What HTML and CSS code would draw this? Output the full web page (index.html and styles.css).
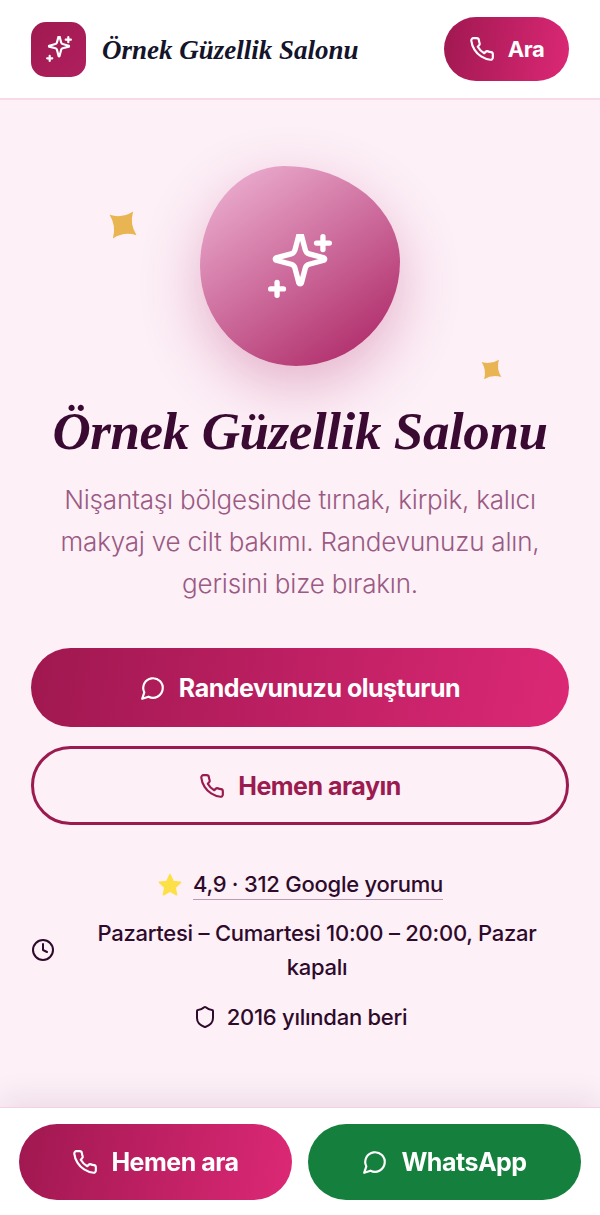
FILE: index.html
```html
<!DOCTYPE html>
<html lang="tr">
  <head>
    <meta charset="UTF-8" />
    <meta name="viewport" content="width=device-width, initial-scale=1.0" />
    <title>Örnek Güzellik Salonu</title>
    <link rel="stylesheet" href="styles.css">
  </head>
  <body>
    <svg class="sprite" aria-hidden="true">
      <symbol id="i-sparkle" viewBox="0 0 24 24">
        <path d="M10.1 14.6A2 2 0 0 0 8.7 13.2L3 11.7a.5.5 0 0 1 0-.9L8.7 9.3A2 2 0 0 0 10.1 7.9L11.6 2.2a.5.5 0 0 1 .9 0L14 7.9A2 2 0 0 0 15.4 9.3L21 10.800a.5.5 0 0 1 0 .9L15.4 13.2A2 2 0 0 0 14 14.6L12.5 20.3a.5.5 0 0 1-.9 0z" transform="translate(0 -1.85)"/>
        <path d="M20.6 1v4.8M18.2 3.4H23M3.4 18.2V23M1 20.6h4.8"/>
      </symbol>
      <symbol id="i-phone" viewBox="0 0 24 24">
        <path d="M22 16.92v3a2 2 0 0 1-2.18 2 19.79 19.79 0 0 1-8.63-3.07 19.5 19.5 0 0 1-6-6 19.79 19.79 0 0 1-3.07-8.67A2 2 0 0 1 4.11 2h3a2 2 0 0 1 2 1.72 12.84 12.84 0 0 0 .7 2.81 2 2 0 0 1-.45 2.11L8.09 9.91a16 16 0 0 0 6 6l1.27-1.27a2 2 0 0 1 2.11-.45 12.84 12.84 0 0 0 2.81.7A2 2 0 0 1 22 16.92z"/>
      </symbol>
      <symbol id="i-chat" viewBox="0 0 24 24">
        <path d="M7.9 20A9 9 0 1 0 4 16.1L2 22Z"/>
      </symbol>
      <symbol id="i-clock" viewBox="0 0 24 24">
        <circle cx="12" cy="12" r="10"/>
        <path d="M12 6v6l4 2"/>
      </symbol>
      <symbol id="i-shield" viewBox="0 0 24 24">
        <path d="M20 13c0 5-3.5 7.5-7.66 8.95a1 1 0 0 1-.67-.01C7.5 20.5 4 18 4 13V6a1 1 0 0 1 1-1c2 0 4.5-1.2 6.24-2.72a1.17 1.17 0 0 1 1.52 0C14.51 3.81 17 5 19 5a1 1 0 0 1 1 1z"/>
      </symbol>
      <symbol id="i-glint" viewBox="0 0 24 24">
        <path d="M1 1 Q12 6 23 1 Q18 12 23 23 Q12 18 1 23 Q6 12 1 1Z"/>
      </symbol>
    </svg>

    <header class="topbar">
      <div class="brand">
        <span class="brand-mark"><svg class="icon icon-26"><use href="#i-sparkle"/></svg></span>
        <span class="brand-name">Örnek Güzellik Salonu</span>
      </div>
      <a class="btn btn-primary btn-call" href="#"><svg class="icon icon-26"><use href="#i-phone"/></svg>Ara</a>
    </header>

    <main class="hero">
      <svg class="glint glint-a"><use href="#i-glint"/></svg>
      <svg class="glint glint-b"><use href="#i-glint"/></svg>
      <div class="blob"><svg class="icon icon-64"><use href="#i-sparkle"/></svg></div>
      <h1>Örnek Güzellik Salonu</h1>
      <p class="lead">Nişantaşı bölgesinde tırnak, kirpik, kalıcı makyaj ve cilt bakımı. Randevunuzu alın, gerisini bize bırakın.</p>
      <div class="actions">
        <a class="btn btn-primary btn-big" href="#"><svg class="icon icon-26"><use href="#i-chat"/></svg>Randevunuzu oluşturun</a>
        <a class="btn btn-outline btn-big" href="#"><svg class="icon icon-26"><use href="#i-phone"/></svg>Hemen arayın</a>
      </div>
      <ul class="facts">
        <li>
          <svg class="star" viewBox="0 0 24 24"><path d="M12 2.500l2.900 6.300 6.800.8-5 4.700 1.300 6.700-6-3.400-6 3.400 1.300-6.700-5-4.700 6.800-.8z"/></svg>
          <a class="rating" href="#">4,9 · 312 Google yorumu</a>
        </li>
        <li>
          <svg class="icon icon-24"><use href="#i-clock"/></svg>
          <span class="hours">Pazartesi – Cumartesi 10:00 – 20:00, Pazar kapalı</span>
        </li>
        <li>
          <svg class="icon icon-24"><use href="#i-shield"/></svg>
          <span>2016 yılından beri</span>
        </li>
      </ul>
    </main>

    <nav class="callbar">
      <a class="btn btn-primary" href="#"><svg class="icon icon-26"><use href="#i-phone"/></svg>Hemen ara</a>
      <a class="btn btn-green" href="#"><svg class="icon icon-26"><use href="#i-chat"/></svg>WhatsApp</a>
    </nav>
  </body>
</html>
```

FILE: styles.css
```css
* {
  box-sizing: border-box;
}
body {
  margin: 0;
  min-height: 1215px;
  background-color: #fdf0f7;
  color: #2e0a2b;
  font-family: "Inter", "Noto Sans", sans-serif;
}
.sprite {
  display: none;
}
.icon {
  flex: none;
  fill: none;
  stroke: currentColor;
  stroke-width: 2;
  stroke-linecap: round;
  stroke-linejoin: round;
}
.icon-24 {
  width: 24px;
  height: 24px;
}
.icon-26 {
  width: 26px;
  height: 26px;
}
.icon-64 {
  width: 64px;
  height: 64px;
}

.topbar {
  display: flex;
  align-items: center;
  justify-content: space-between;
  height: 100px;
  padding: 0 31px;
  background-color: #fff;
  border-bottom: 2px solid #f9d9e9;
}
.brand {
  display: flex;
  align-items: center;
  gap: 16px;
}
.brand-mark {
  display: flex;
  align-items: center;
  justify-content: center;
  width: 55px;
  height: 55px;
  border-radius: 15px;
  background: linear-gradient(135deg, #9f1a50, #b01f5f);
  color: #fff;
}
.brand-name {
  padding-top: 3px;
  font-family: "Liberation Serif", serif;
  font-style: italic;
  font-weight: 700;
  font-size: 27px;
  color: #14142b;
}

.btn {
  display: flex;
  align-items: center;
  justify-content: center;
  gap: 13px;
  border-radius: 40px;
  font-weight: 700;
  text-decoration: none;
  letter-spacing: -0.5px;
}
.btn-primary {
  background: linear-gradient(100deg, #a01850, #dc2876);
  color: #fff;
}
.btn-green {
  background-color: #15803d;
  color: #fff;
}
.btn-outline {
  border: 3px solid #9b1b50;
  color: #9b1b50;
}
.btn-call {
  width: 125px;
  height: 64px;
  font-size: 22px;
}
.btn-big {
  height: 79px;
  font-size: 25px;
}

.hero {
  position: relative;
  display: flex;
  flex-direction: column;
  align-items: center;
  padding: 66px 31px 0;
}
.glint {
  position: absolute;
  fill: #e9b552;
}
.glint-a {
  left: 110px;
  top: 112px;
  width: 26px;
  height: 26px;
  transform: rotate(-8deg);
}
.glint-b {
  left: 482px;
  top: 260px;
  width: 19px;
  height: 19px;
  transform: rotate(-8deg);
}
.blob {
  display: flex;
  align-items: center;
  justify-content: center;
  width: 200px;
  height: 200px;
  border-radius: 42% 58% 52% 48% / 50% 48% 52% 50%;
  background: linear-gradient(145deg, #f0b8d8, #a91e5f);
  box-shadow: 0 20px 60px rgba(169, 30, 95, 0.3);
  color: #fff;
}
h1 {
  margin: 31px 0 0;
  font-family: "Liberation Serif", serif;
  font-style: italic;
  font-weight: 700;
  font-size: 53px;
  letter-spacing: -0.4px;
  line-height: 68px;
  white-space: nowrap;
  color: #3a0a33;
}
.lead {
  margin: 14px 0 0;
  font-size: 26px;
  font-weight: 300;
  letter-spacing: -0.2px;
  line-height: 42px;
  text-align: center;
  color: #9a5a83;
}
.actions {
  display: flex;
  flex-direction: column;
  gap: 19px;
  align-self: stretch;
  margin-top: 43px;
}
.facts {
  display: flex;
  flex-direction: column;
  gap: 16px;
  margin: 44px 0 0;
  padding: 0;
  list-style: none;
  font-size: 22px;
  font-weight: 500;
  letter-spacing: -0.25px;
  line-height: 34px;
}
.facts li {
  display: flex;
  align-items: center;
  justify-content: center;
  gap: 10px;
  text-align: center;
}
.star {
  width: 26px;
  height: 26px;
  fill: #fde047;
  stroke: #fde047;
  stroke-width: 1.5;
  stroke-linejoin: round;
}
.rating {
  color: inherit;
  text-decoration: none;
  border-bottom: 1px solid #b79ab4;
  line-height: 30px;
}
.hours {
  flex: 1;
  padding: 0 18px;
}

.callbar {
  position: fixed;
  left: 0;
  right: 0;
  bottom: 0;
  display: grid;
  grid-template-columns: 1fr 1fr;
  gap: 16px;
  height: 108px;
  padding: 16px 19px 15px;
  background-color: #fff;
  border-top: 1px solid #f8d0e4;
  box-shadow: 0 -8px 30px rgba(60, 10, 50, 0.09);
  font-size: 25px;
}
```
